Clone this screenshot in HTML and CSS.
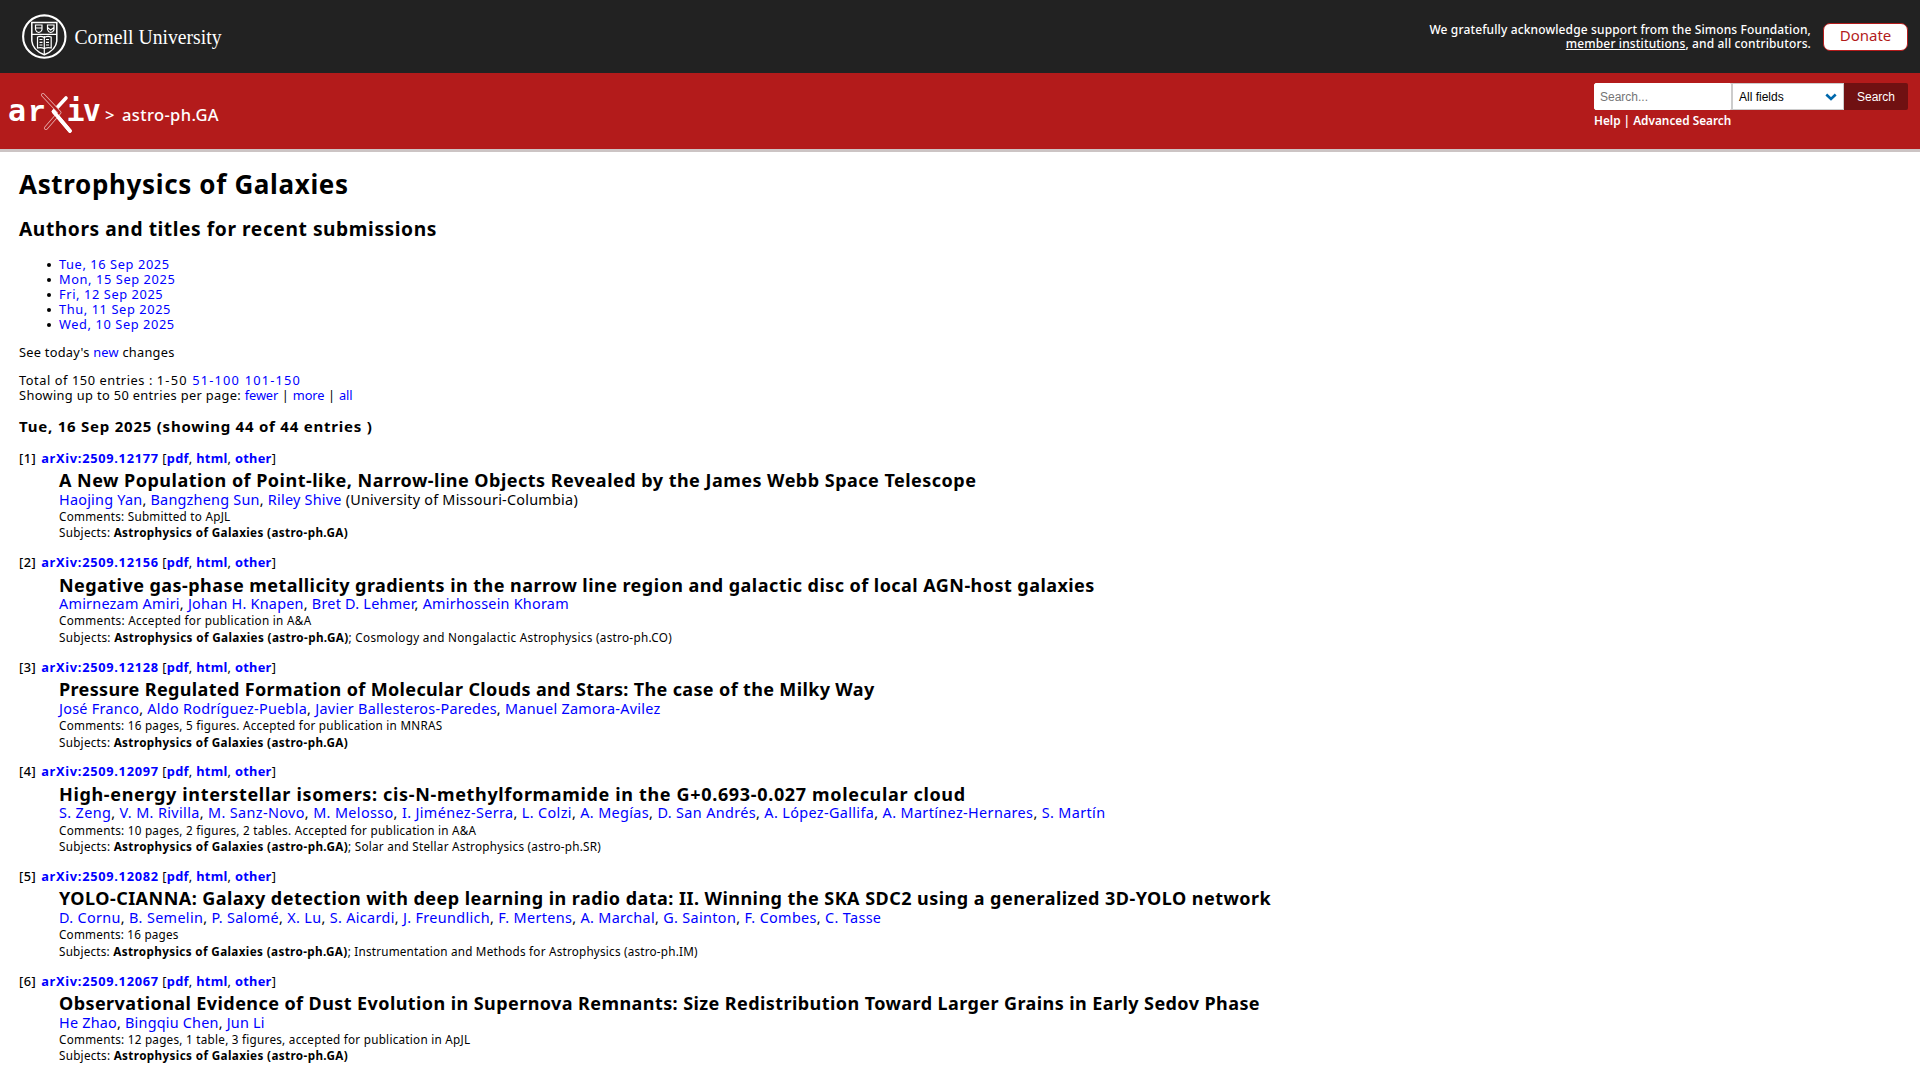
FILE: index.html
```html
<!DOCTYPE html>
<html lang="en">
<head>
<meta charset="utf-8">
<title>Astrophysics of Galaxies</title>
<link rel="stylesheet" href="styles.css">
</head>
<body>
<header>
  <div class="topbar">
    <svg class="cornell" width="240" height="73" viewBox="0 0 240 73" role="img" aria-label="Cornell University">
      <circle cx="44.3" cy="36.6" r="21.2" fill="none" stroke="#fff" stroke-width="2.1"/>
      <g fill="none" stroke="#fff" stroke-width="1.2">
        <path d="M31.8 22.5H56.8V41Q56 50 44.3 54.8Q32.6 50 31.8 41Z" stroke-width="1.5"/>
        <path d="M31.8 34.3H56.8M44.3 36V54.5"/>
        <path d="M35.5 25H42V29.5Q41.500 32 38.700 32.500Q36 32 35.500 29.500ZM35.500 28H42"/>
        <path d="M47.500 25H54V29.500Q53.500 32 50.700 32.500Q48 32 47.500 29.500ZM47.500 27.500L50.700 30L54 27.500"/>
        <path d="M37.500 37Q41 35.500 44.300 37.500Q47.500 35.500 51.200 37V48Q47.500 47 44.300 48.500Q41 47 37.500 48Z"/>
        <path d="M39.500 39.500H42.500M39.500 42.300H42.500M39.500 45H42.500M46 39.500H49M46 42.300H49M46 45H49"/>
      </g>
      <text class="cornell-name" x="74.500" y="43.600" textLength="147" lengthAdjust="spacingAndGlyphs">Cornell University</text>
    </svg>
    <div class="support">
      <p>We gratefully acknowledge support from the Simons Foundation,<br><a href="#">member institutions</a>, and all contributors.</p>
      <a class="donate" href="#">Donate</a>
    </div>
  </div>
  <div class="banner">
    <div class="brand">
      <svg width="100" height="50" viewBox="4 88 100 50" role="img" aria-label="arXiv">
        <g class="logo-letters"><text x="8" y="121.200">a</text><text class="slab" x="28" y="121.200">r</text><text x="66.500" y="121.200">i</text><text x="82.800" y="121.200">v</text></g>
        <g fill="none" stroke-linecap="round" stroke-linejoin="round">
          <path d="M66 98L53.500 111.500L70 131" stroke="#fff" stroke-width="3.600"/>
          <path d="M43 95L59.500 112.500L46 128" stroke="#e8b0b0" stroke-width="4"/>
          <path d="M43 95L59.500 112.500L46 128" stroke="#b31b1b" stroke-width="2.400"/>
          <path d="M53.500 111.500L70 131" stroke="#fff" stroke-width="3.600"/>
        </g>
      </svg>
      <span class="gt">&gt;</span><span class="archive">astro-ph.GA</span>
    </div>
    <form class="search">
      <div class="fields">
        <input type="text" placeholder="Search...">
        <div class="select"><span>All fields</span>
          <svg width="12" height="8" viewBox="0 0 12 8"><path d="M1.300 1.500L6 6L10.700 1.500" fill="none" stroke="#0068ac" stroke-width="2.600"/></svg>
        </div>
        <button type="button">Search</button>
      </div>
      <p><a href="#">Help</a> | <a href="#">Advanced Search</a></p>
    </form>
  </div>
</header>
<main>
  <h1>Astrophysics of Galaxies</h1>
  <h2>Authors and titles for recent submissions</h2>
  <ul>
    <li><a href="#">Tue, 16 Sep 2025</a></li>
    <li><a href="#">Mon, 15 Sep 2025</a></li>
    <li><a href="#">Fri, 12 Sep 2025</a></li>
    <li><a href="#">Thu, 11 Sep 2025</a></li>
    <li><a href="#">Wed, 10 Sep 2025</a></li>
  </ul>
  <p class="today">See today's <a href="#">new</a> changes</p>
  <p class="total">Total of 150 entries : <span class="pages">1-50 <a href="#">51-100</a> <a href="#">101-150</a></span></p>
  <p class="showing">Showing up to 50 entries per page: <a href="#">fewer</a> | <a href="#">more</a> | <a href="#">all</a></p>
  <h3>Tue, 16 Sep 2025 (showing 44 of 44 entries )</h3>

  <article class="entry e1">
    <p class="ref"><span class="num">[1]</span> <a class="id" href="#">arXiv:2509.12177</a> [<a href="#">pdf</a>, <a href="#">html</a>, <a href="#">other</a>]</p>
    <p class="title">A New Population of Point-like, Narrow-line Objects Revealed by the James Webb Space Telescope</p>
    <p class="authors"><a href="#">Haojing Yan</a>, <a href="#">Bangzheng Sun</a>, <a href="#">Riley Shive</a> (University of Missouri-Columbia)</p>
    <p class="meta">Comments: Submitted to ApJL</p>
    <p class="meta">Subjects: <b>Astrophysics of Galaxies (astro-ph.GA)</b></p>
  </article>
  <article class="entry e2">
    <p class="ref"><span class="num">[2]</span> <a class="id" href="#">arXiv:2509.12156</a> [<a href="#">pdf</a>, <a href="#">html</a>, <a href="#">other</a>]</p>
    <p class="title">Negative gas-phase metallicity gradients in the narrow line region and galactic disc of local AGN-host galaxies</p>
    <p class="authors"><a href="#">Amirnezam Amiri</a>, <a href="#">Johan H. Knapen</a>, <a href="#">Bret D. Lehmer</a>, <a href="#">Amirhossein Khoram</a></p>
    <p class="meta">Comments: Accepted for publication in A&amp;A</p>
    <p class="meta">Subjects: <b>Astrophysics of Galaxies (astro-ph.GA)</b>; Cosmology and Nongalactic Astrophysics (astro-ph.CO)</p>
  </article>
  <article class="entry e3">
    <p class="ref"><span class="num">[3]</span> <a class="id" href="#">arXiv:2509.12128</a> [<a href="#">pdf</a>, <a href="#">html</a>, <a href="#">other</a>]</p>
    <p class="title">Pressure Regulated Formation of Molecular Clouds and Stars: The case of the Milky Way</p>
    <p class="authors"><a href="#">José Franco</a>, <a href="#">Aldo Rodríguez-Puebla</a>, <a href="#">Javier Ballesteros-Paredes</a>, <a href="#">Manuel Zamora-Avilez</a></p>
    <p class="meta">Comments: 16 pages, 5 figures. Accepted for publication in MNRAS</p>
    <p class="meta">Subjects: <b>Astrophysics of Galaxies (astro-ph.GA)</b></p>
  </article>
  <article class="entry e4">
    <p class="ref"><span class="num">[4]</span> <a class="id" href="#">arXiv:2509.12097</a> [<a href="#">pdf</a>, <a href="#">html</a>, <a href="#">other</a>]</p>
    <p class="title">High-energy interstellar isomers: cis-N-methylformamide in the G+0.693-0.027 molecular cloud</p>
    <p class="authors"><a href="#">S. Zeng</a>, <a href="#">V. M. Rivilla</a>, <a href="#">M. Sanz-Novo</a>, <a href="#">M. Melosso</a>, <a href="#">I. Jiménez-Serra</a>, <a href="#">L. Colzi</a>, <a href="#">A. Megías</a>, <a href="#">D. San Andrés</a>, <a href="#">A. López-Gallifa</a>, <a href="#">A. Martínez-Hernares</a>, <a href="#">S. Martín</a></p>
    <p class="meta">Comments: 10 pages, 2 figures, 2 tables. Accepted for publication in A&amp;A</p>
    <p class="meta">Subjects: <b>Astrophysics of Galaxies (astro-ph.GA)</b>; Solar and Stellar Astrophysics (astro-ph.SR)</p>
  </article>
  <article class="entry e5">
    <p class="ref"><span class="num">[5]</span> <a class="id" href="#">arXiv:2509.12082</a> [<a href="#">pdf</a>, <a href="#">html</a>, <a href="#">other</a>]</p>
    <p class="title">YOLO-CIANNA: Galaxy detection with deep learning in radio data: II. Winning the SKA SDC2 using a generalized 3D-YOLO network</p>
    <p class="authors"><a href="#">D. Cornu</a>, <a href="#">B. Semelin</a>, <a href="#">P. Salomé</a>, <a href="#">X. Lu</a>, <a href="#">S. Aicardi</a>, <a href="#">J. Freundlich</a>, <a href="#">F. Mertens</a>, <a href="#">A. Marchal</a>, <a href="#">G. Sainton</a>, <a href="#">F. Combes</a>, <a href="#">C. Tasse</a></p>
    <p class="meta">Comments: 16 pages</p>
    <p class="meta">Subjects: <b>Astrophysics of Galaxies (astro-ph.GA)</b>; Instrumentation and Methods for Astrophysics (astro-ph.IM)</p>
  </article>
  <article class="entry e6">
    <p class="ref"><span class="num">[6]</span> <a class="id" href="#">arXiv:2509.12067</a> [<a href="#">pdf</a>, <a href="#">html</a>, <a href="#">other</a>]</p>
    <p class="title">Observational Evidence of Dust Evolution in Supernova Remnants: Size Redistribution Toward Larger Grains in Early Sedov Phase</p>
    <p class="authors"><a href="#">He Zhao</a>, <a href="#">Bingqiu Chen</a>, <a href="#">Jun Li</a></p>
    <p class="meta">Comments: 12 pages, 1 table, 3 figures, accepted for publication in ApJL</p>
    <p class="meta">Subjects: <b>Astrophysics of Galaxies (astro-ph.GA)</b></p>
  </article>
  <article class="entry">
    <p class="ref"><span class="num">[7]</span> <a class="id" href="#">arXiv</a> [<a href="#">pdf</a>, <a href="#">html</a>, <a href="#">other</a>]</p>
  </article>
</main>
</body>
</html>
```
FILE: styles.css
```css
* { box-sizing: border-box; }
html, body { height: 100%; }
body {
  display: flex;
  flex-direction: column;
  margin: 0;
  overflow: hidden;
  background: #fff;
  color: #000;
  font-family: "Lucida Grande", "Noto Sans", sans-serif;
  font-size: 12.8px;
  line-height: 15px;
}
p, h1, h2, h3, ul { margin: 0; white-space: nowrap; }
a { color: #00f; text-decoration: none; }

header { flex: none; }
.topbar {
  display: flex;
  justify-content: space-between;
  height: 73px;
  background: #222;
}
.cornell-name { font: 21px "Liberation Serif", serif; fill: #fff; }
.support { display: flex; align-items: center; gap: 12px; padding-right: 12px; }
.support p {
  color: #fff;
  font-size: 12px;
  font-weight: 500;
  line-height: 14px;
  letter-spacing: .13px;
  text-align: right;
}
.support p a { color: #fff; text-decoration: underline; }
.donate {
  width: 85px;
  height: 28px;
  border: 1px solid #b31b1b;
  border-radius: 7px;
  background: #fff;
  color: #b31b1b;
  font-size: 15px;
  line-height: 23px;
  text-align: center;
}

.banner {
  display: flex;
  justify-content: space-between;
  height: 79px;
  background: #b31b1b;
  border-bottom: 3px solid #ccc4c4;
}
.brand { display: flex; align-items: flex-start; padding: 15px 0 0 4px; color: #fff; }
.logo-letters { font: bold 30px "DejaVu Sans Mono", monospace; fill: #fff; }
.logo-letters .slab { font-family: "Liberation Mono", monospace; }
.gt, .archive { font-size: 16.5px; font-weight: 500; line-height: 22px; padding-top: 16px; }
.gt { width: 17px; margin-left: 1px; }
.archive { letter-spacing: .38px; }

.search { width: 326px; padding-top: 10px; }
.fields { display: flex; width: 314px; height: 27px; font: 12px "Liberation Sans", sans-serif; }
.fields input {
  width: 137px;
  padding: 0 5px;
  border: 1px solid #fff;
  border-radius: 2px 0 0 2px;
  font: inherit;
}
.fields input::placeholder { color: #757575; }
.select {
  display: flex;
  align-items: center;
  justify-content: space-between;
  width: 113px;
  padding: 0 6px;
  border: 1px solid #ccc;
  border-left-width: 2px;
  background: #fff;
}
.fields button {
  flex: 1;
  padding: 1px 0 0;
  border: 0;
  border-radius: 0 2px 2px 0;
  background: #701112;
  color: #fff;
  font: inherit;
}
.search p { margin-top: 3px; color: #fff; font-size: 11.8px; font-weight: 600; }
.search a { color: #fff; }

main { flex: 1; min-height: 0; overflow: hidden; padding: 17px 19px 0; }
h1 { font-size: 26px; line-height: 30px; letter-spacing: .65px; }
h2 { margin-top: 17.5px; font-size: 19.2px; line-height: 24px; letter-spacing: .57px; }
ul { margin-top: 16.5px; padding-left: 28px; letter-spacing: .6px; list-style: none; }
li { display: flex; align-items: center; gap: 8px; }
li::before { content: ""; width: 4px; height: 4px; border-radius: 50%; background: #000; }
.today { margin-top: 12.5px; letter-spacing: .25px; }
.total { margin-top: 13px; letter-spacing: .56px; }
.pages { letter-spacing: 1.2px; }
.showing { letter-spacing: .36px; }
.showing a { letter-spacing: -.15px; }
h3 { margin-top: 14.7px; font-size: 15px; line-height: 18px; letter-spacing: .77px; }

.entry { height: 104.6px; padding-left: 40px; }
h3 + .entry { margin-top: 15.5px; }
.ref { margin-left: -40px; letter-spacing: .3px; }
.ref a { font-weight: 700; }
.num { display: inline-block; width: 18.5px; font-weight: 500; letter-spacing: .5px; }
.ref .id { display: inline-block; width: 117.5px; letter-spacing: .72px; }
.title { margin-top: 3.3px; font-size: 18px; font-weight: 700; line-height: 22px; }
.authors { margin-top: -.3px; font-size: 14.4px; line-height: 18px; }
.meta { font-size: 11.7px; line-height: 16px; letter-spacing: .26px; }
.authors + .meta { margin: -.9px 0 .6px; }
.meta b { letter-spacing: .37px; }

.e1 .title { letter-spacing: .48px; }
.e2 .title { letter-spacing: .45px; }
.e3 .title { letter-spacing: .36px; }
.e4 .title { letter-spacing: .66px; }
.e5 .title { letter-spacing: .46px; }
.e6 .title { letter-spacing: .42px; }
.e1 .authors, .e2 .authors { letter-spacing: .24px; }
.e3 .authors { letter-spacing: .28px; }
.e4 .authors { letter-spacing: .37px; }
.e5 .authors { letter-spacing: .34px; }
.e6 .authors { letter-spacing: .22px; }
.e2 .meta { letter-spacing: .31px; }
.e5 .meta { letter-spacing: .22px; }
.e2 .meta b, .e5 .meta b { letter-spacing: .37px; }
```
